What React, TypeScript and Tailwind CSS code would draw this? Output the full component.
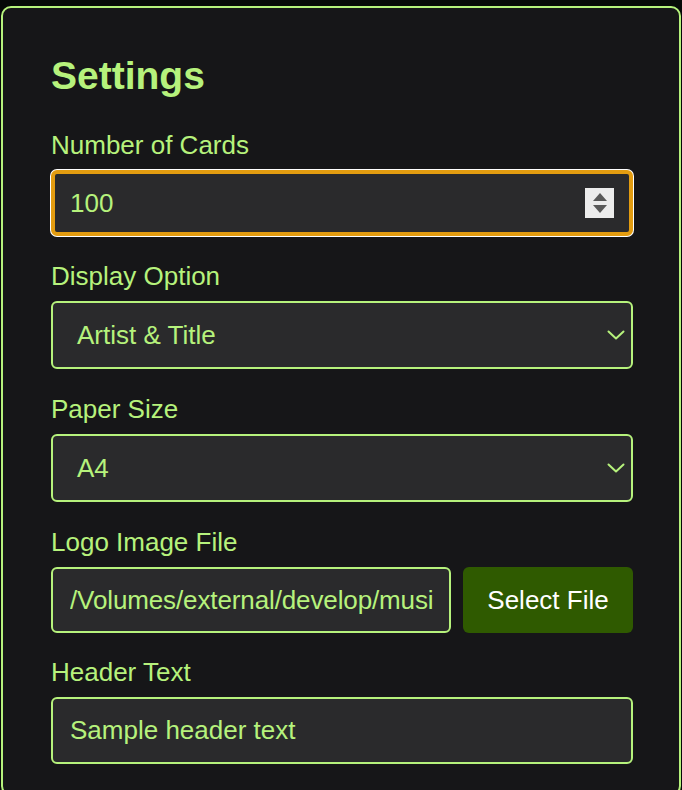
import React from "react";

const lime = "text-[#b6f27c]";

function Label({ children }: { children: React.ReactNode }) {
  return (
    <div className={`block text-[26px] leading-[30px] mb-[10px] ${lime}`}>{children}</div>
  );
}

function Chevron() {
  return (
    <svg width="18" height="10" viewBox="0 0 18 10" fill="none" className="shrink-0">
      <path d="M1.5 1.5 L9 8.5 L16.5 1.5" stroke="#b6f27c" strokeWidth="2" strokeLinecap="round" strokeLinejoin="round" />
    </svg>
  );
}

function Spinner() {
  return (
    <div className="w-[29px] h-[30px] bg-[#ececec] flex flex-col items-center justify-center gap-[4px]">
      <svg width="14" height="8" viewBox="0 0 14 8">
        <path d="M7 0 L14 8 L0 8 Z" fill="#595959" />
      </svg>
      <svg width="14" height="8" viewBox="0 0 14 8">
        <path d="M0 0 L14 0 L7 8 Z" fill="#595959" />
      </svg>
    </div>
  );
}

function SelectBox({ value }: { value: string }) {
  return (
    <div className="h-[68px] rounded-[6px] border-2 border-[#b6f27c] bg-[#2a2a2c] flex items-center pl-[24px] pr-[6px]">
      <span className={`flex-1 text-[26px] ${lime}`}>{value}</span>
      <Chevron />
    </div>
  );
}

export default function App() {
  return (
    <div
      className="min-h-[790px] bg-[#060908] pt-[6px] pl-[1px]"
      style={{ fontFamily: '"Liberation Sans", Arial, Helvetica, sans-serif' }}
    >
      <div className="w-[680px] min-h-[790px] rounded-[10px] border-2 border-[#b6f27c] bg-[#161618] pl-[48px] pr-[46px] pt-[46px]">
        <h2 className={`text-[39px] leading-[44px] font-bold mb-[32px] ${lime}`}>Settings</h2>

        <div className="flex flex-col gap-[25px]">
          <div>
            <Label>Number of Cards</Label>
            <div className="h-[66px] rounded-[6px] border-[4px] border-[#e39c10] ring-1 ring-white bg-[#2a2a2c] flex items-center pl-[15px] pr-[15px]">
              <span className={`flex-1 text-[26px] ${lime}`}>100</span>
              <Spinner />
            </div>
          </div>

          <div>
            <Label>Display Option</Label>
            <SelectBox value="Artist & Title" />
          </div>

          <div>
            <Label>Paper Size</Label>
            <SelectBox value="A4" />
          </div>

          <div>
            <Label>Logo Image File</Label>
            <div className="flex gap-[12px]">
              <div className="w-[400px] h-[66px] rounded-[6px] border-2 border-[#b6f27c] bg-[#2a2a2c] flex items-center pl-[17px] pr-[16px] overflow-hidden">
                <span className={`block overflow-hidden whitespace-nowrap text-[26px] tracking-[-0.12px] ${lime}`}>
                  /Volumes/external/develop/music-cards/assets/logo.png
                </span>
              </div>
              <div className="flex-1 h-[66px] rounded-[6px] bg-[#2f5a00] flex items-center justify-center text-white text-[26px]">
                Select File
              </div>
            </div>
          </div>

          <div className="-mt-px">
            <Label>Header Text</Label>
            <div className="h-[67px] rounded-[6px] border-2 border-[#b6f27c] bg-[#2a2a2c] flex items-center px-[17px]">
              <span className={`text-[26px] ${lime}`}>Sample header text</span>
            </div>
          </div>
        </div>
      </div>
    </div>
  );
}
